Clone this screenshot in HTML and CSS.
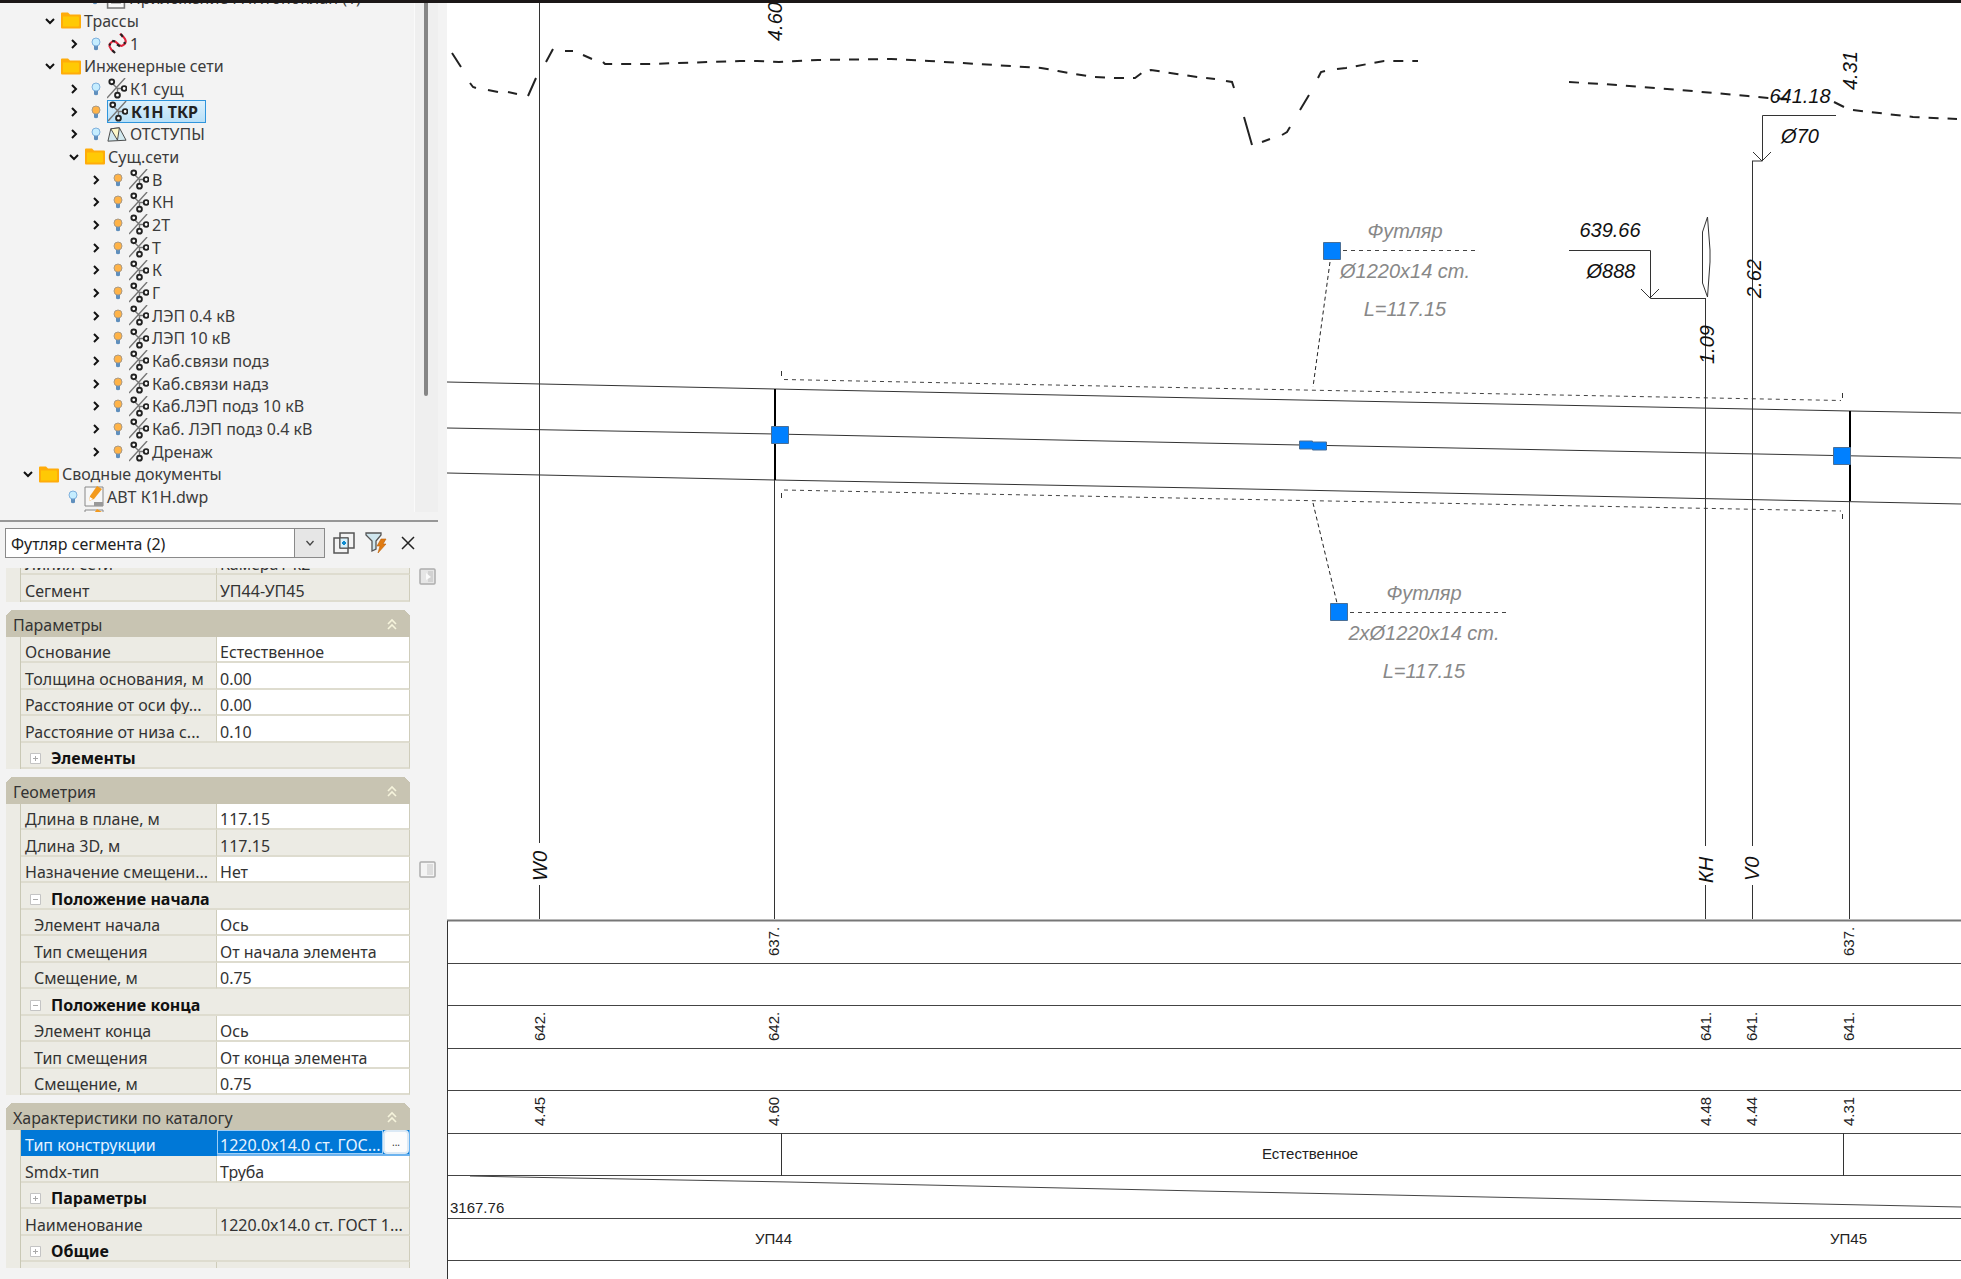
FILE: index.html
```
<!DOCTYPE html>
<html lang="ru">
<head>
<meta charset="utf-8">
<title>Профиль сети</title>
<link rel="stylesheet" href="styles.css">
</head>
<body>
<svg class="defs" aria-hidden="true">
  <symbol id="i-right" viewBox="0 0 10 10"><path d="M3 1l4 4-4 4" fill="none" stroke="#111" stroke-width="2"/></symbol>
  <symbol id="i-down" viewBox="0 0 10 10"><path d="M1 3l4 4 4-4" fill="none" stroke="#111" stroke-width="2"/></symbol>
  <symbol id="i-folder" viewBox="0 0 20 18"><path d="M0 2q0-1 1-1h6l2 2h10q1 0 1 1v12q0 1-1 1H1q-1 0-1-1z" fill="#ffac0a"/><path d="M2 5h15q1 0 1 1v8q0 1-1 1H2z" fill="#ffc905"/></symbol>
  <symbol id="i-bulb-off" viewBox="0 0 10 14"><path d="M3 8h4v4.500q-2 1.500-4 0z" fill="#5f8fbd"/><circle cx="5" cy="5" r="4" fill="#c5edff" stroke="#7fb0dc"/></symbol>
  <symbol id="i-bulb-on" viewBox="0 0 10 14"><path d="M3 8h4v4.500q-2 1.500-4 0z" fill="#5f8fbd"/><circle cx="5" cy="5" r="4" fill="#ffb347" stroke="#a99a86"/></symbol>
  <symbol id="i-net" viewBox="0 0 21 22"><path d="M0 21L19 0M6 6l5 5 5 0M11 11v5" stroke="#777" stroke-width="1.500" fill="none"/><g fill="#fff" stroke="#222" stroke-width="2"><circle cx="5" cy="4" r="2.500"/><circle cx="11" cy="18" r="2.500"/><circle cx="18" cy="11" r="2.500"/></g></symbol>
  <symbol id="i-route" viewBox="0 0 20 22"><path d="M7 20C2 16 0 12 5 9s6 7 11 4 4-7-3-12" fill="none" stroke="#e0243c" stroke-width="2.200"/><path d="M5 18l3 3M2 11l1 2M5 8l3 1M10 12l3 2M17 11l2-1M14 1l2 3" stroke="#222" stroke-width="2.200"/></symbol>
  <symbol id="i-surf" viewBox="0 0 21 16"><path d="M1 15L4 2l9-1 7 13z" fill="#d3e9ef" stroke="#444"/><path d="M4 2l9-1-2 13z" fill="#fdf8c8" stroke="#444"/></symbol>
  <symbol id="i-dwp" viewBox="0 0 20 21"><path d="M1 1h18v19H1z" fill="#f7f7f7" stroke="#888"/><path d="M10 16h9v4h-9z" fill="#999"/><path d="M5 15l1-5L13 0l5 3-8 10z" fill="#f39a1d"/><path d="M5 15l1-4 3 2z" fill="#fff"/></symbol>
  <symbol id="i-sheet" viewBox="0 0 18 20"><path d="M1 1h16v18H1zM5 4h8v10H5z" fill="#fafafa" stroke="#777" stroke-width="1.500"/></symbol>
  <symbol id="i-fold" viewBox="0 0 10 12"><path d="M1 6l4-4 4 4M1 11l4-4 4 4" fill="none" stroke="#f6f4dc" stroke-width="1.600"/></symbol>
  <symbol id="i-plus" viewBox="0 0 11 11"><path d="M.5.5h10v10H.5z" fill="#fff" stroke="#c4c4c4"/><path d="M3 5.500h5M5.500 3v5" stroke="#aaa"/></symbol>
  <symbol id="i-minus" viewBox="0 0 11 11"><path d="M.5.5h10v10H.5z" fill="#fff" stroke="#c4c4c4"/><path d="M3 5.500h5" stroke="#aaa"/></symbol>
  <symbol id="i-dock" viewBox="0 0 17 17"><rect x="1" y="1" width="15" height="15" rx="1" fill="#f4f4f4" stroke="#adadad" stroke-width="1.500"/><path d="M8 3h6v11H8z" fill="#ddd"/></symbol>
  <symbol id="i-dock-arrow" viewBox="0 0 17 17"><rect x="1" y="1" width="15" height="15" rx="1" fill="#e6e6e6" stroke="#adadad" stroke-width="1.500"/><path d="M9 3h5v11H9z" fill="#d2d2d2"/><path d="M7 5l5 4-5 3z" fill="#fafafa"/></symbol>
</svg>

<aside class="side">
  <nav class="browser" aria-label="Структура проекта">
    <ul class="tree">
      <li class="node lv3"><svg class="bulb"><use href="#i-bulb-off"/></svg><svg class="icon"><use href="#i-sheet"/></svg>Приложение ГНГ.Топоплан (1)</li>
      <li class="node lv1"><button class="tw" aria-label="Свернуть"><svg><use href="#i-down"/></svg></button><svg class="icon"><use href="#i-folder"/></svg>Трассы</li>
      <li class="node lv2"><button class="tw" aria-label="Развернуть"><svg><use href="#i-right"/></svg></button><svg class="bulb"><use href="#i-bulb-off"/></svg><svg class="icon"><use href="#i-route"/></svg>1</li>
      <li class="node lv1"><button class="tw" aria-label="Свернуть"><svg><use href="#i-down"/></svg></button><svg class="icon"><use href="#i-folder"/></svg>Инженерные сети</li>
      <li class="node lv2"><button class="tw" aria-label="Развернуть"><svg><use href="#i-right"/></svg></button><svg class="bulb"><use href="#i-bulb-off"/></svg><svg class="icon"><use href="#i-net"/></svg>К1 сущ</li>
      <li class="node lv2"><button class="tw" aria-label="Развернуть"><svg><use href="#i-right"/></svg></button><svg class="bulb"><use href="#i-bulb-on"/></svg><span class="picked"><svg class="icon"><use href="#i-net"/></svg>К1Н ТКР</span></li>
      <li class="node lv2"><button class="tw" aria-label="Развернуть"><svg><use href="#i-right"/></svg></button><svg class="bulb"><use href="#i-bulb-off"/></svg><svg class="icon"><use href="#i-surf"/></svg>ОТСТУПЫ</li>
      <li class="node lv2"><button class="tw" aria-label="Свернуть"><svg><use href="#i-down"/></svg></button><svg class="icon"><use href="#i-folder"/></svg>Сущ.сети</li>
      <li class="node lv3"><button class="tw" aria-label="Развернуть"><svg><use href="#i-right"/></svg></button><svg class="bulb"><use href="#i-bulb-on"/></svg><svg class="icon"><use href="#i-net"/></svg>В</li>
      <li class="node lv3"><button class="tw" aria-label="Развернуть"><svg><use href="#i-right"/></svg></button><svg class="bulb"><use href="#i-bulb-on"/></svg><svg class="icon"><use href="#i-net"/></svg>КН</li>
      <li class="node lv3"><button class="tw" aria-label="Развернуть"><svg><use href="#i-right"/></svg></button><svg class="bulb"><use href="#i-bulb-on"/></svg><svg class="icon"><use href="#i-net"/></svg>2Т</li>
      <li class="node lv3"><button class="tw" aria-label="Развернуть"><svg><use href="#i-right"/></svg></button><svg class="bulb"><use href="#i-bulb-on"/></svg><svg class="icon"><use href="#i-net"/></svg>Т</li>
      <li class="node lv3"><button class="tw" aria-label="Развернуть"><svg><use href="#i-right"/></svg></button><svg class="bulb"><use href="#i-bulb-on"/></svg><svg class="icon"><use href="#i-net"/></svg>К</li>
      <li class="node lv3"><button class="tw" aria-label="Развернуть"><svg><use href="#i-right"/></svg></button><svg class="bulb"><use href="#i-bulb-on"/></svg><svg class="icon"><use href="#i-net"/></svg>Г</li>
      <li class="node lv3"><button class="tw" aria-label="Развернуть"><svg><use href="#i-right"/></svg></button><svg class="bulb"><use href="#i-bulb-on"/></svg><svg class="icon"><use href="#i-net"/></svg>ЛЭП 0.4 кВ</li>
      <li class="node lv3"><button class="tw" aria-label="Развернуть"><svg><use href="#i-right"/></svg></button><svg class="bulb"><use href="#i-bulb-on"/></svg><svg class="icon"><use href="#i-net"/></svg>ЛЭП 10 кВ</li>
      <li class="node lv3"><button class="tw" aria-label="Развернуть"><svg><use href="#i-right"/></svg></button><svg class="bulb"><use href="#i-bulb-on"/></svg><svg class="icon"><use href="#i-net"/></svg>Каб.связи подз</li>
      <li class="node lv3"><button class="tw" aria-label="Развернуть"><svg><use href="#i-right"/></svg></button><svg class="bulb"><use href="#i-bulb-on"/></svg><svg class="icon"><use href="#i-net"/></svg>Каб.связи надз</li>
      <li class="node lv3"><button class="tw" aria-label="Развернуть"><svg><use href="#i-right"/></svg></button><svg class="bulb"><use href="#i-bulb-on"/></svg><svg class="icon"><use href="#i-net"/></svg>Каб.ЛЭП подз 10 кВ</li>
      <li class="node lv3"><button class="tw" aria-label="Развернуть"><svg><use href="#i-right"/></svg></button><svg class="bulb"><use href="#i-bulb-on"/></svg><svg class="icon"><use href="#i-net"/></svg>Каб. ЛЭП подз 0.4 кВ</li>
      <li class="node lv3"><button class="tw" aria-label="Развернуть"><svg><use href="#i-right"/></svg></button><svg class="bulb"><use href="#i-bulb-on"/></svg><svg class="icon"><use href="#i-net"/></svg>Дренаж</li>
      <li class="node lv0"><button class="tw" aria-label="Свернуть"><svg><use href="#i-down"/></svg></button><svg class="icon"><use href="#i-folder"/></svg>Сводные документы</li>
      <li class="node lv2"><svg class="bulb"><use href="#i-bulb-off"/></svg><svg class="icon"><use href="#i-dwp"/></svg>АВТ К1Н.dwp</li>
      <li class="node lv2"><svg class="bulb"></svg><svg class="icon"><use href="#i-dwp"/></svg></li>
    </ul>
    <div class="scroll"><div class="thumb"></div></div>
  </nav>

  <div class="picker">
    <div class="combo">
      <select aria-label="Выбранные объекты"><option>Футляр сегмента (2)</option></select>
      <svg class="drop" viewBox="0 0 10 10"><path d="M1.500 3l3.500 4 3.500-4" fill="none" stroke="#444" stroke-width="1.300"/></svg>
    </div>
    <button class="tool" aria-label="Добавить к выбору"><svg viewBox="0 0 22 22"><path d="M7 1h14v15H7z" fill="#f3f3f3" stroke="#555" stroke-width="1.500"/><path d="M1 6h14v15H1z" fill="none" stroke="#555" stroke-width="1.500"/><path d="M7 6h8v10H7z" fill="#d9f1fb" stroke="#555"/><path d="M9 11h4M11 9v4" stroke="#0c8bd0" stroke-width="2"/></svg></button>
    <button class="tool" aria-label="Быстрый выбор"><svg viewBox="0 0 22 22"><path d="M1 1h15v2l-5 6v8l-4 2V9L1 3z" fill="#cfe6ee" stroke="#555" stroke-width="1.300"/><path d="M16 7h5l-3 5h3l-8 9 2-7h-3z" fill="#e07b12" stroke="#b8600a" stroke-width=".6"/></svg></button>
    <button class="tool" aria-label="Закрыть"><svg viewBox="0 0 22 22"><path d="M5 5l12 12M17 5L5 17" stroke="#222" stroke-width="1.500"/></svg></button>
  </div>

  <div class="props">
    <div class="groups">
      <section class="group">
        <table>
          <tr><th>Линия сети</th><td class="ro">Камера1-к2</td></tr>
          <tr><th>Сегмент</th><td class="ro">УП44-УП45</td></tr>
        </table>
      </section>
      <section class="group">
        <button class="head">Параметры<svg><use href="#i-fold"/></svg></button>
        <table>
          <tr><th>Основание</th><td>Естественное</td></tr>
          <tr><th>Толщина основания, м</th><td>0.00</td></tr>
          <tr><th>Расстояние от оси фу...</th><td>0.00</td></tr>
          <tr><th>Расстояние от низа с...</th><td>0.10</td></tr>
          <tr><th class="sub" colspan="2"><svg><use href="#i-plus"/></svg>Элементы</th></tr>
        </table>
      </section>
      <section class="group">
        <button class="head">Геометрия<svg><use href="#i-fold"/></svg></button>
        <table>
          <tr><th>Длина в плане, м</th><td>117.15</td></tr>
          <tr><th>Длина 3D, м</th><td class="ro">117.15</td></tr>
          <tr><th>Назначение смещени...</th><td>Нет</td></tr>
          <tr><th class="sub" colspan="2"><svg><use href="#i-minus"/></svg>Положение начала</th></tr>
          <tr><th class="in">Элемент начала</th><td>Ось</td></tr>
          <tr><th class="in">Тип смещения</th><td>От начала элемента</td></tr>
          <tr><th class="in">Смещение, м</th><td>0.75</td></tr>
          <tr><th class="sub" colspan="2"><svg><use href="#i-minus"/></svg>Положение конца</th></tr>
          <tr><th class="in">Элемент конца</th><td>Ось</td></tr>
          <tr><th class="in">Тип смещения</th><td>От конца элемента</td></tr>
          <tr><th class="in">Смещение, м</th><td>0.75</td></tr>
        </table>
      </section>
      <section class="group">
        <button class="head">Характеристики по каталогу<svg><use href="#i-fold"/></svg></button>
        <table>
          <tr class="active"><th>Тип конструкции</th><td><div class="edit"><span>1220.0x14.0 ст. ГОС...</span><button aria-label="Выбрать">...</button></div></td></tr>
          <tr><th>Smdx-тип</th><td>Труба</td></tr>
          <tr><th class="sub" colspan="2"><svg><use href="#i-plus"/></svg>Параметры</th></tr>
          <tr><th>Наименование</th><td class="ro">1220.0x14.0 ст. ГОСТ 1...</td></tr>
          <tr><th class="sub" colspan="2"><svg><use href="#i-plus"/></svg>Общие</th></tr>
          <tr><th></th><td class="ro"></td></tr>
        </table>
      </section>
    </div>
    <div class="tabs">
      <button aria-label="Вкладка 1"><svg><use href="#i-dock-arrow"/></svg></button>
      <button aria-label="Вкладка 2"><svg><use href="#i-dock"/></svg></button>
    </div>
  </div>
</aside>

<main class="canvas">
  <svg class="drawing" viewBox="447 3 1514 1276" preserveAspectRatio="xMinYMin slice" role="img" aria-label="Продольный профиль">
    <!-- ground line -->
    <g class="ground">
      <path class="steep" d="M452 53l9 14M470 83l3 4 3 1M528 96l8-18M546 62l7-13M1234 88l-2-6-6-1M1244 117l8 28M1282 135l5-3 3-5M1300 110l9-15M1318 78l3-6 4-1M1834 102l10 5"/>
      <path d="M488 90l10 2M508 92l9 2M565 51h8M583 55l9 4M1262 142l8-3"/>
      <path class="dash" d="M603 62l2 2 43 0 92-3h17l22 1 39-2 73-1 38 2 34 2 78 5 17 3 17 3 19 3 20 1h21l8-6 8-2 46 7 18 2"/>
      <path class="dash" d="M1337 69l9-1 38-7h34M1569 82l48 3 63 5 68 6 20 2 22 1M1853 110l60 7 44 2"/>
    </g>

    <!-- pipe and chamber lines -->
    <g class="pipe">
      <path d="M447 382L775 389 1200 398 1850 411 1961 413M447 428L775 434 1200 443 1961 458M447 473L775 480 1200 488 1961 504"/>
    </g>
    <path class="wall" d="M775 389v91M1850 411v90"/>
    <path class="dots" d="M784 379.500L1200 388 1841 400.500M784 490L1200 498.500 1841 511"/>
    <path class="thin" d="M781.500 371v5M781.500 493v5M1842.500 393v5M1842.500 514v5"/>

    <!-- verticals down to the table -->
    <path class="thin" d="M539.500 3V843M539.500 885V919M774.500 480V919M1705.500 298V846M1705.500 885V919M1752.500 161V846M1752.500 885V919M1849.500 501V919"/>

    <!-- case callouts -->
    <path class="leader" d="M1330 262L1313 387M1313 503L1337 603"/>
    <path class="dots" d="M1343 250.500H1477M1350 612.500H1508"/>
    <g class="cad faint" text-anchor="middle">
      <text x="1405" y="238">Футляр</text><text x="1405" y="278">Ø1220x14 cm.</text><text x="1405" y="316">L=117.15</text>
      <text x="1424" y="600">Футляр</text><text x="1424" y="640">2xØ1220x14 cm.</text><text x="1424" y="678">L=117.15</text>
    </g>

    <!-- crossing marks -->
    <path class="thin" d="M1569 250.500H1650.500V298.500H1706M1641 289l9 9 9-9M1836 115.500H1762.500V161H1752M1753 152l9 9 9-9M1707.500 217L1702.500 232V283L1707.500 297 1710 262V250z"/>
    <g class="cad" text-anchor="middle">
      <text x="1610" y="237">639.66</text><text x="1611" y="278">Ø888</text>
      <text x="1800" y="103">641.18</text><text x="1800" y="143">Ø70</text>
    </g>
    <g class="cad">
      <text transform="translate(782 41) rotate(-90)">4.60</text>
      <text transform="translate(1857 90) rotate(-90)">4.31</text>
      <text transform="translate(1761 298) rotate(-90)">2.62</text>
      <text transform="translate(1714 364) rotate(-90)">1.09</text>
      <text transform="translate(547 881) rotate(-90)">W0</text>
      <text transform="translate(1713 883) rotate(-90)">КН</text>
      <text transform="translate(1759 881) rotate(-90)">V0</text>
    </g>

    <!-- grips -->
    <g class="grip">
      <path d="M771.500 426.500h17v17h-17zM1833.500 447.500h17v17h-17zM1323.500 242.500h17v17h-17zM1330.500 603.500h17v17h-17z"/>
      <path d="M1299.500 441h13v1h14v8h-14v-1h-13z"/>
    </g>

    <!-- profile table -->
    <path class="frame" d="M447 920.500H1961"/>
    <path class="band" d="M447 963.500H1961M447 1005.500H1961M447 1048.500H1961M447 1090.500H1961M447 1133.500H1961M447 1175.500H1961M447 1218.500H1961M447 1260.500H1961M470 1176L516 1177 789 1182 1200 1191 1961 1207"/>
    <path class="thin" d="M447.500 921V1279M781.500 1133V1176M1843.500 1133V1176"/>
    <g class="num">
      <text transform="translate(779 956) rotate(-90)">637.</text>
      <text transform="translate(1854 956) rotate(-90)">637.</text>
      <text transform="translate(545 1041) rotate(-90)">642.</text>
      <text transform="translate(779 1041) rotate(-90)">642.</text>
      <text transform="translate(1711 1041) rotate(-90)">641.</text>
      <text transform="translate(1757 1041) rotate(-90)">641.</text>
      <text transform="translate(1854 1041) rotate(-90)">641.</text>
      <text transform="translate(545 1126) rotate(-90)">4.45</text>
      <text transform="translate(779 1126) rotate(-90)">4.60</text>
      <text transform="translate(1711 1126) rotate(-90)">4.48</text>
      <text transform="translate(1757 1126) rotate(-90)">4.44</text>
      <text transform="translate(1854 1126) rotate(-90)">4.31</text>
      <text x="1262" y="1159">Естественное</text>
      <text x="450" y="1213">3167.76</text>
      <text x="755" y="1244">УП44</text>
      <text x="1830" y="1244">УП45</text>
    </g>
  </svg>
</main>
</body>
</html>
```
FILE: styles.css
```
* { box-sizing: border-box; }
body {
  margin: 0;
  min-height: 100vh;
  display: flex;
  border-top: 3px solid #1b1717;
  background: #f3f3f3;
  font: 16px/20px "Noto Sans", "Open Sans", sans-serif;
  color: #333;
}
.defs { display: none; }
button { font: inherit; color: inherit; border: 0; padding: 0; background: none; }

.side { flex: 0 0 447px; min-width: 0; }

/* project tree */
.browser {
  display: flex;
  align-items: flex-start;
  height: 509px;
  width: 438px;
  overflow: hidden;
}
.tree {
  flex: 1;
  height: 544px;
  margin: -16px 0 0;
  padding: 0;
  list-style: none;
  display: grid;
  grid-auto-rows: 1fr;
}
.node { display: flex; align-items: center; white-space: nowrap; min-height: 0; color: #3c3c3c; }
.node svg { flex: none; }
.lv0 { padding-left: 16px; }
.lv1 { padding-left: 38px; }
.lv2 { padding-left: 62px; }
.lv3 { padding-left: 84px; }
.tw { flex: none; width: 23px; height: 20px; display: flex; align-items: center; justify-content: center; }
.tw svg { width: 10px; height: 10px; }
.bulb { width: 22px; height: 14px; }
.icon { width: 20px; height: 21px; margin-right: 3px; }
.picked {
  display: flex;
  align-items: center;
  height: 23px;
  padding-right: 7px;
  border: 1px solid #2f95dc;
  background: linear-gradient(#dcf0fc, #b8e0f8);
  font-weight: bold;
  color: #222;
}
.scroll { width: 24px; height: 509px; background: #efefef; border-left: 1px solid #fafafa; }
.thumb { width: 4px; height: 393px; margin-left: 9px; background: #868686; border-radius: 0 0 2px 2px; }

/* selection bar */
.picker {
  display: flex;
  align-items: center;
  width: 438px;
  height: 48px;
  margin-top: 8px;
  padding: 0 0 4px 5px;
  gap: 10px;
  border-top: 2px solid #979797;
}
.combo { position: relative; width: 320px; height: 30px; margin-right: -2px; }
.combo select {
  width: 100%;
  height: 100%;
  padding: 2px 34px 0 5px;
  appearance: none;
  border: 1px solid #8a8a8a;
  border-radius: 0;
  background: linear-gradient(90deg, #8a8a8a 1px, #e6e6e6 1px) right / 30px 100% no-repeat #fff;
  font: inherit;
  color: #222;
}
.drop { position: absolute; right: 10px; top: 10px; width: 10px; height: 10px; pointer-events: none; }
.tool { width: 22px; height: 22px; }
.tool svg { display: block; width: 22px; height: 22px; }

/* property grid */
.props { display: flex; height: 700px; }
.groups {
  width: 404px;
  margin-left: 6px;
  height: 700px;
  overflow: hidden;
  display: flex;
  flex-direction: column;
  gap: 8px;
}
.group { flex: none; background: #ecebe4; }
.group:first-child { margin-top: -19px; }
.head {
  display: flex;
  align-items: center;
  justify-content: space-between;
  width: 100%;
  height: 27px;
  padding: 3px 13px 0 7px;
  background: linear-gradient(135deg, #f3f3f3 4px, #c8c4b2 4px) left / 50% 100% no-repeat,
    linear-gradient(225deg, #f3f3f3 4px, #c8c4b2 4px) right / 50% 100% no-repeat;
  color: #333;
}
.head svg { width: 10px; height: 12px; margin-bottom: 3px; }
table { width: 390px; margin-left: 14px; border-collapse: separate; border-spacing: 0; table-layout: fixed; border-left: 1px solid #c9c8b5; }
tr { height: 26px; }
tr:nth-child(even) { height: 27px; }
th, td { padding: 6px 0 0 4px; line-height: 18px; border-bottom: 2px solid #dedccf; border-right: 1px solid #cfcdbb; text-align: left; white-space: nowrap; overflow: hidden; }
th { width: 196px; font-weight: normal; }
td { padding-left: 3px; background: #fff; }
td.ro { background: #ecebe4; }
th.in { padding-left: 13px; }
th.sub { padding-left: 9px; font-weight: bold; color: #111; }
.sub svg { width: 11px; height: 11px; margin-right: 10px; }
.active th { background: #0078d7; color: #e6f3ff; border-color: #0078d7; }
.active td { padding: 0; background: #0078d7; border-color: #6db3ee; }
.edit { display: flex; height: 24px; color: #e6f3ff; }
.edit span { flex: 1; padding: 5px 0 0 2px; line-height: 18px; border: 1px solid #9dcdf5; }
.edit button { width: 26px; background: #fcfcfc; border: 2px solid #dbe9f5; border-radius: 4px; font-size: 10px; line-height: 18px; color: #333; }
.tabs { display: flex; flex-direction: column; gap: 276px; margin-left: 9px; }
.tabs button { width: 17px; height: 17px; }
.tabs svg { display: block; width: 17px; height: 17px; }

/* drawing */
.canvas { flex: 1; min-width: 0; background: #fff; display: flex; }
.drawing { flex: 1; min-width: 0; display: block; }
.drawing path { fill: none; }
.ground { stroke: #222; stroke-width: 2; }
.ground .dash { stroke-dasharray: 10 9; }
.pipe { stroke: #333; stroke-width: 1; }
.wall { stroke: #000; stroke-width: 2; }
.thin { stroke: #333; stroke-width: 1; }
.dots { stroke: #444; stroke-width: 1; stroke-dasharray: 4 4; }
.leader { stroke: #222; stroke-width: 1; stroke-dasharray: 4 3; }
.frame { stroke: #777; stroke-width: 2; }
.band { stroke: #444; stroke-width: 1; }
.drawing .grip path { fill: #0080ff; stroke: #4a6f96; stroke-width: 1; }
.cad { font: italic 20px "Liberation Sans", sans-serif; fill: #111; }
.faint { fill: #888; }
.num { font: 15px "Liberation Sans", sans-serif; fill: #222; }
```
